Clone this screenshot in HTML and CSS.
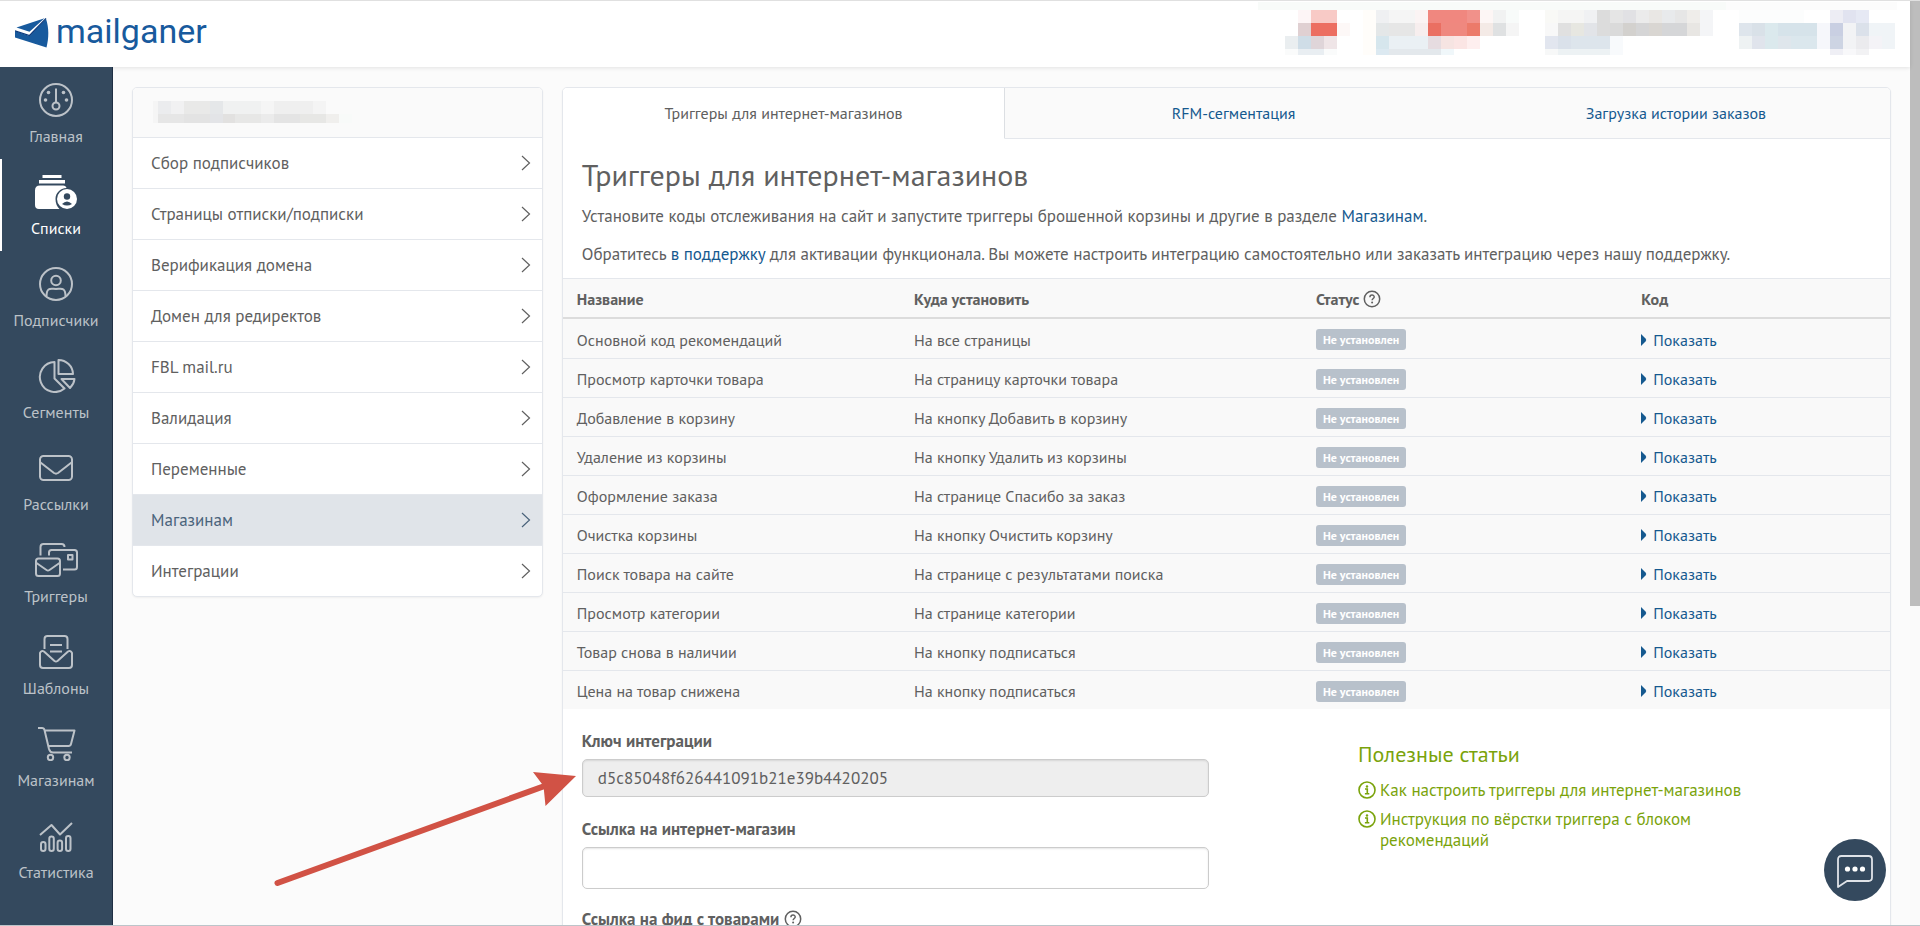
FILE: index.html
```
<!DOCTYPE html>
<html lang="ru">
<head>
<meta charset="utf-8">
<title>Mailganer — Магазинам</title>
<link rel="stylesheet" href="styles.css">
</head>
<body>
<svg class="defs" aria-hidden="true">
  <symbol id="chevron" viewBox="0 0 10 16"><path d="M1 1l7.500 7L1 15" fill="none" stroke="currentColor" stroke-width="1.200"/></symbol>
  <symbol id="caret" viewBox="0 0 6 12"><path d="M0 0L4.500 4.500Q6 6 4.500 7.500L0 12z" fill="currentColor"/></symbol>
  <symbol id="help" viewBox="0 0 18 18"><circle cx="9" cy="9" r="7.700" fill="none" stroke="currentColor" stroke-width="1.500"/><path d="M6.900 7.200C6.900 4.300 11.200 4.400 11.200 6.900 11.200 8.500 9.100 8.500 9.100 10.300" fill="none" stroke="currentColor" stroke-width="1.500"/><circle cx="9.100" cy="12.500" r="1" fill="currentColor"/></symbol>
  <symbol id="info" viewBox="0 0 18 18"><circle cx="9" cy="9" r="8" fill="none" stroke="currentColor" stroke-width="1.600"/><circle cx="9" cy="5.500" r="1.200" fill="currentColor"/><path d="M7 8h2.300v4.600M6.900 12.800h4.400" fill="none" stroke="currentColor" stroke-width="1.600"/></symbol>
</svg>

<div class="page">
  <header class="topbar">
    <a class="logo" href="#">
      <svg class="logo-mark" viewBox="0 0 34 31"><path d="M1.500 10.500L29.500 1.200 14.500 14.800z" fill="#185a9d"/><path d="M0 14l14.500 5L31 1.800C34 11 34 21 31.500 30.500L0 20.500z" fill="#185a9d"/><path d="M0 13.800l14.500 4.700L31 1.400" fill="none" stroke="#0d3a7c" stroke-width="1.200"/></svg>
      <span>mailganer</span>
    </a>
    <svg class="account" viewBox="1258 2 640 55" shape-rendering="crispEdges" aria-hidden="true">
      <path fill="#f8fbf9" d="M1258 2h468v8h-468z"/><path fill="#fcfcfc" d="M1726 2h171v8h-171z"/>
      <path fill="#fdf5f6" d="M1298 10h13v13h-13z"/><path fill="#f8cac6" d="M1311 10h26v13h-26z"/><path fill="#fffdfa" d="M1363 10h13v45h-13z"/><path fill="#eff0f2" d="M1376 10h13v13h-13z"/><path fill="#f5f5f5" d="M1389 10h26v13h-26z"/><path fill="#fbf4f4" d="M1415 10h13v13h-13z"/><path fill="#f0877f" d="M1428 10h39v13h-39z"/><path fill="#f1918a" d="M1467 10h13v13h-13z"/><path fill="#fdf6f5" d="M1480 10h13v13h-13z"/><path fill="#f1f2f2" d="M1493 10h13v13h-13z"/><path fill="#f8fbfa" d="M1506 10h13v13h-13z"/>
      <path fill="#e0d0d2" d="M1298 23h13v13h-13z"/><path fill="#ec6e61" d="M1311 23h26v13h-26z"/><path fill="#fdf8f7" d="M1337 23h13v13h-13z"/><path fill="#e4e7e8" d="M1376 23h13v13h-13z"/><path fill="#e6e6e6" d="M1389 23h26v13h-26z"/><path fill="#f7eeee" d="M1415 23h13v13h-13z"/><path fill="#ea6f62" d="M1428 23h13v13h-13z"/><path fill="#ef887f" d="M1441 23h26v13h-26z"/><path fill="#ec7a6a" d="M1467 23h13v13h-13z"/><path fill="#f4eae6" d="M1480 23h13v13h-13z"/><path fill="#dfe1e2" d="M1493 23h13v13h-13z"/><path fill="#f5f5f5" d="M1506 23h13v13h-13z"/>
      <path fill="#eaeef0" d="M1285 36h13v13h-13z"/><path fill="#cfdde7" d="M1298 36h13v13h-13z"/><path fill="#dfd5d9" d="M1311 36h13v13h-13z"/><path fill="#efe5e7" d="M1324 36h13v13h-13z"/><path fill="#d6e6ed" d="M1376 36h13v13h-13z"/><path fill="#eaf0f4" d="M1389 36h39v13h-39z"/><path fill="#e6dce0" d="M1428 36h13v13h-13z"/><path fill="#f6e4e2" d="M1441 36h13v13h-13z"/><path fill="#fbe5e4" d="M1454 36h13v13h-13z"/><path fill="#feefef" d="M1467 36h13v13h-13z"/>
      <path fill="#fafbfb" d="M1285 49h52v6h-52z"/><path fill="#e9eef2" d="M1298 49h26v6h-26z"/><path fill="#dce9f1" d="M1376 49h13v6h-13z"/><path fill="#e3e8ec" d="M1389 49h52v6h-52z"/><path fill="#f0f7fa" d="M1441 49h13v6h-13z"/>
      <path fill="#f9f9f6" d="M1545 10h13v13h-13z"/><path fill="#f5f5f4" d="M1558 10h26v13h-26z"/><path fill="#f0f1f3" d="M1584 10h13v13h-13z"/><path fill="#dcdcdc" d="M1597 10h13v26h-13z"/><path fill="#e5e5e5" d="M1610 10h13v13h-13z"/><path fill="#e1e1e4" d="M1623 10h13v13h-13z"/><path fill="#ebebeb" d="M1636 10h13v13h-13z"/><path fill="#e9e7e4" d="M1649 10h13v13h-13z"/><path fill="#e8eaec" d="M1662 10h13v13h-13z"/><path fill="#e6e6e6" d="M1675 10h12v13h-12z"/><path fill="#efedea" d="M1687 10h13v13h-13z"/><path fill="#f4f5f7" d="M1700 10h13v26h-13z"/>
      <path fill="#f8f8f8" d="M1545 23h13v13h-13z"/><path fill="#e0e0e0" d="M1558 23h13v13h-13z"/><path fill="#e7e7e1" d="M1571 23h13v13h-13z"/><path fill="#e2e4e8" d="M1584 23h13v13h-13z"/><path fill="#dadada" d="M1610 23h13v13h-13z"/><path fill="#d3d1ce" d="M1623 23h13v13h-13z"/><path fill="#d5d5d6" d="M1636 23h13v13h-13z"/><path fill="#d9d6d2" d="M1649 23h13v13h-13z"/><path fill="#d5d6d8" d="M1662 23h25v13h-25z"/><path fill="#e8e6e3" d="M1687 23h13v13h-13z"/>
      <path fill="#e2e6ef" d="M1545 36h13v13h-13z"/><path fill="#dae1ea" d="M1558 36h13v13h-13z"/><path fill="#dde5ec" d="M1571 36h39v13h-39z"/><path fill="#f8fafc" d="M1610 36h13v19h-13z"/><path fill="#f7f8f8" d="M1545 49h13v6h-13z"/><path fill="#edf2f4" d="M1558 49h52v6h-52z"/>
      <path fill="#fcfdfd" d="M1739 10h65v13h-65z"/><path fill="#dee5ec" d="M1739 23h13v13h-13z"/><path fill="#d9e1e8" d="M1752 23h13v13h-13z"/><path fill="#dbe9ed" d="M1765 23h13v26h-13z"/><path fill="#d6e3ea" d="M1778 23h39v13h-39z"/><path fill="#eef2f3" d="M1739 36h13v13h-13z"/><path fill="#e0e4ec" d="M1752 36h13v13h-13z"/><path fill="#dfe6ec" d="M1778 36h13v13h-13z"/><path fill="#dbe7ed" d="M1791 36h26v13h-26z"/><path fill="#f6f7fb" d="M1817 23h13v26h-13z"/>
      <path fill="#ededf4" d="M1830 10h13v13h-13z"/><path fill="#e1e3f0" d="M1843 10h13v13h-13z"/><path fill="#e6e9f4" d="M1856 10h13v13h-13z"/><path fill="#c9cfe2" d="M1830 23h13v13h-13z"/><path fill="#f2f3f5" d="M1843 23h13v26h-13z"/><path fill="#dbe1ea" d="M1856 23h13v13h-13z"/><path fill="#f0f4f7" d="M1869 23h26v26h-26z"/><path fill="#cdd4e3" d="M1830 36h13v13h-13z"/><path fill="#ebebee" d="M1856 36h13v13h-13z"/><path fill="#f4f3f7" d="M1869 36h13v13h-13z"/><path fill="#efeff5" d="M1830 49h13v6h-13z"/><path fill="#f8f8fa" d="M1843 49h13v6h-13z"/><path fill="#f2f2f4" d="M1856 49h13v6h-13z"/>
    </svg>
  </header>

  <div class="body">
    <nav class="sidebar">
      <a href="#"><svg viewBox="0 0 34 34"><circle cx="17" cy="17" r="16"/><circle cx="17" cy="23" r="3.500"/><path d="M17 19.500V5.500"/><g class="fill"><circle cx="9.500" cy="9.500" r="1.800"/><circle cx="24.500" cy="9.500" r="1.800"/><circle cx="6.500" cy="17" r="1.800"/><circle cx="27.500" cy="17" r="1.800"/></g></svg>Главная</a>
      <a href="#" class="active"><svg class="wide" viewBox="0 0 43 34"><path class="fill" d="M7.500 0h19v3h-19zM4 5h26v3.500h-26zM5 10.500h23q3 0 3.500 2.500C25 13.500 20.500 18 20.500 24q0 6 4 10H4q-4 0-4-4V15.500q0-5 5-5z"/><circle class="fill" cx="32" cy="24" r="10"/><g class="cut"><circle cx="32" cy="21.500" r="3.200"/><path d="M27 29q5-5 10 0-5 3-10 0z"/></g></svg>Списки</a>
      <a href="#"><svg viewBox="0 0 34 34"><circle cx="17" cy="17" r="16"/><circle cx="17" cy="13.500" r="4.800"/><path d="M7.500 29.500c0-10 4.500-7.500 9.500-7.500s9.500-2.500 9.500 7.500"/></svg>Подписчики</a>
      <a href="#"><svg class="wide" viewBox="-4.500 0 43 34"><path d="M15 3A15 15 0 1 0 25 29.500L15 19.500z"/><path d="M19 1a14.500 14.500 0 0 1 14.500 14H19z"/><path d="M22 20h13q-.5 5-4.500 9z"/></svg>Сегменты</a>
      <a href="#"><svg viewBox="0 0 34 34"><rect x="1" y="5" width="32" height="24" rx="3.500"/><path d="M1.500 11.500L15 22q2 1.300 4 0l13.500-10.500"/></svg>Рассылки</a>
      <a href="#"><svg class="wide" viewBox="0 0 43 34"><rect x="1" y="15.500" width="24" height="17.500" rx="2.500"/><path d="M1.500 20l10 7q1.500 1 3 0l10-7M5.500 12.500V4q0-3 3-3h18q3 0 3 3M14 12.500v-3q0-2.500 2.500-2.500h23q2.500 0 2.500 2.500V24q0 2.500-2.500 2.500H28"/><rect x="33" y="12" width="4.500" height="4.500"/></svg>Триггеры</a>
      <a href="#"><svg viewBox="0 0 34 34"><path d="M5.500 14V4q0-3 3-3h17q3 0 3 3v10M11 10h12M11 16.500h12M1 18v12q0 3 3 3h26q3 0 3-3V18q-1.500-3-4-1.500L18.500 26q-1.500 1-3 0L5 16.500Q2.500 15 1 18z"/></svg>Шаблоны</a>
      <a href="#"><svg class="wide" viewBox="-2 0 43 34"><path d="M1 1h4q2 0 2.500 2l4.500 19q1 3.500 4 3.500h19M7.500 3.500h30L34 17q-.5 2-2.500 2H11"/><circle cx="13.500" cy="30.500" r="2.700"/><circle cx="30" cy="30.500" r="2.700"/></svg>Магазинам</a>
      <a href="#"><svg viewBox="0 0 34 34"><path d="M1 16L12.500 6l8.500 9.500L33 4"/><rect x="2" y="23" width="4.500" height="9" rx="2.200"/><rect x="10.300" y="17.500" width="4.500" height="14.500" rx="2.200"/><rect x="18.600" y="21.500" width="4.500" height="10.500" rx="2.200"/><rect x="27" y="17" width="4.500" height="15" rx="2.200"/></svg>Статистика</a>
    </nav>

    <main class="content">
      <aside class="submenu">
        <div class="submenu-head">
          <svg class="account-name" viewBox="0 0 200 22" shape-rendering="crispEdges" aria-hidden="true">
            <path fill="#f5f5f5" d="M1 0h5v22h-5z"/><path fill="#ebecee" d="M6 0h13v13h-13z"/><path fill="#f1f1f2" d="M19 0h13v13h-13z"/><path fill="#e9e9e8" d="M32 0h26v13h-26z"/><path fill="#e5e7e9" d="M58 0h13v13h-13z"/><path fill="#f0f1f1" d="M71 0h38v13h-38z"/><path fill="#f5f5f5" d="M109 0h13v13h-13z"/><path fill="#efefef" d="M122 0h39v13h-39z"/><path fill="#f4f4f4" d="M161 0h13v13h-13z"/>
            <path fill="#e6e6e6" d="M6 13h26v9h-26z"/><path fill="#e3e3e3" d="M32 13h26v9h-26z"/><path fill="#e3e4e7" d="M58 13h13v9h-13z"/><path fill="#e2e1e0" d="M71 13h12v9h-12z"/><path fill="#e7e7e6" d="M83 13h26v9h-26z"/><path fill="#ebebeb" d="M109 13h13v9h-13z"/><path fill="#e4e4e4" d="M122 13h26v9h-26z"/><path fill="#e7e7e5" d="M148 13h26v9h-26z"/><path fill="#f0efed" d="M174 13h13v9h-13z"/><path fill="#f8faf9" d="M187 13h13v9h-13z"/>
          </svg>
        </div>
        <a href="#">Сбор подписчиков<svg><use href="#chevron"/></svg></a>
        <a href="#">Страницы отписки/подписки<svg><use href="#chevron"/></svg></a>
        <a href="#">Верификация домена<svg><use href="#chevron"/></svg></a>
        <a href="#">Домен для редиректов<svg><use href="#chevron"/></svg></a>
        <a href="#">FBL mail.ru<svg><use href="#chevron"/></svg></a>
        <a href="#">Валидация<svg><use href="#chevron"/></svg></a>
        <a href="#">Переменные<svg><use href="#chevron"/></svg></a>
        <a href="#" class="current">Магазинам<svg><use href="#chevron"/></svg></a>
        <a href="#">Интеграции<svg><use href="#chevron"/></svg></a>
      </aside>

      <section class="panel">
        <nav class="tabs">
          <a href="#" class="selected">Триггеры для интернет-магазинов</a>
          <a href="#">RFM-сегментация</a>
          <a href="#">Загрузка истории заказов</a>
        </nav>
        <div class="intro">
          <h1>Триггеры для интернет-магазинов</h1>
          <p>Установите коды отслеживания на сайт и запустите триггеры брошенной корзины и другие в разделе <a href="#">Магазинам</a>.</p>
          <p>Обратитесь <a href="#">в поддержку</a> для активации функционала. Вы можете настроить интеграцию самостоятельно или заказать интеграцию через нашу поддержку.</p>
        </div>
        <table class="codes">
          <colgroup><col class="c-name"><col class="c-place"><col class="c-status"><col></colgroup>
          <thead><tr><th>Название</th><th>Куда установить</th><th>Статус <svg class="help"><use href="#help"/></svg></th><th>Код</th></tr></thead>
          <tbody>
            <tr><td>Основной код рекомендаций</td><td>На все страницы</td><td><span class="badge">Не установлен</span></td><td><a href="#"><svg><use href="#caret"/></svg>Показать</a></td></tr>
            <tr><td>Просмотр карточки товара</td><td>На страницу карточки товара</td><td><span class="badge">Не установлен</span></td><td><a href="#"><svg><use href="#caret"/></svg>Показать</a></td></tr>
            <tr><td>Добавление в корзину</td><td>На кнопку Добавить в корзину</td><td><span class="badge">Не установлен</span></td><td><a href="#"><svg><use href="#caret"/></svg>Показать</a></td></tr>
            <tr><td>Удаление из корзины</td><td>На кнопку Удалить из корзины</td><td><span class="badge">Не установлен</span></td><td><a href="#"><svg><use href="#caret"/></svg>Показать</a></td></tr>
            <tr><td>Оформление заказа</td><td>На странице Спасибо за заказ</td><td><span class="badge">Не установлен</span></td><td><a href="#"><svg><use href="#caret"/></svg>Показать</a></td></tr>
            <tr><td>Очистка корзины</td><td>На кнопку Очистить корзину</td><td><span class="badge">Не установлен</span></td><td><a href="#"><svg><use href="#caret"/></svg>Показать</a></td></tr>
            <tr><td>Поиск товара на сайте</td><td>На странице с результатами поиска</td><td><span class="badge">Не установлен</span></td><td><a href="#"><svg><use href="#caret"/></svg>Показать</a></td></tr>
            <tr><td>Просмотр категории</td><td>На странице категории</td><td><span class="badge">Не установлен</span></td><td><a href="#"><svg><use href="#caret"/></svg>Показать</a></td></tr>
            <tr><td>Товар снова в наличии</td><td>На кнопку подписаться</td><td><span class="badge">Не установлен</span></td><td><a href="#"><svg><use href="#caret"/></svg>Показать</a></td></tr>
            <tr><td>Цена на товар снижена</td><td>На кнопку подписаться</td><td><span class="badge">Не установлен</span></td><td><a href="#"><svg><use href="#caret"/></svg>Показать</a></td></tr>
          </tbody>
        </table>
        <div class="settings">
          <form class="fields">
            <div class="field"><label for="key">Ключ интеграции</label><input id="key" type="text" value="d5c85048f626441091b21e39b4420205" readonly></div>
            <div class="field"><label for="shop">Ссылка на интернет-магазин</label><input id="shop" type="text"></div>
            <div class="field"><label for="feed">Ссылка на фид с товарами <svg class="help"><use href="#help"/></svg></label><input id="feed" type="text"></div>
          </form>
          <div class="articles">
            <h2>Полезные статьи</h2>
            <a href="#"><svg><use href="#info"/></svg><span>Как настроить триггеры для интернет-магазинов</span></a>
            <a href="#"><svg><use href="#info"/></svg><span>Инструкция по вёрстки триггера с блоком рекомендаций</span></a>
          </div>
        </div>
      </section>
    </main>
  </div>
</div>
<div class="scrollbar"><div class="thumb"></div></div>

<svg class="arrow" viewBox="0 0 304 118" aria-hidden="true"><path d="M4.500 113L273 15.500" stroke="#d15245" stroke-width="6" stroke-linecap="round"/><path d="M303 6L260 2l10.500 14 2 20z" fill="#d15245"/></svg>
<button class="chat" type="button" aria-label="Чат"><svg viewBox="0 0 36 34"><path d="M1 32V4.500Q1 1 4.500 1h27Q35 1 35 4.500v18q0 3.500-3.500 3.500H10z" fill="none" stroke="#dfe3e8" stroke-width="1.800" stroke-linejoin="round"/><g fill="#fff"><circle cx="10.500" cy="14" r="2.600"/><circle cx="18" cy="14" r="2.600"/><circle cx="25.500" cy="14" r="2.600"/></g></svg></button>
</body>
</html>
```
FILE: styles.css
```
*, *::before, *::after { box-sizing: border-box; }

body {
  margin: 0;
  height: 100vh;
  display: flex;
  overflow: hidden;
  position: relative;
  border-top: 1px solid #e0e0e0;
  border-bottom: 1px solid #bcc5ca;
  background: #fbfbfb;
  color: #606060;
  font-family: "PT Sans", Roboto, "Liberation Sans", sans-serif;
  font-size: 17px;
  line-height: 22px;
}

a { color: #15598f; text-decoration: none; }
svg { display: block; }
.defs { position: absolute; width: 0; height: 0; }

.page { flex: 1; min-width: 0; display: flex; flex-direction: column; }

/* top bar */
.topbar {
  flex: none;
  height: 66px;
  display: flex;
  justify-content: space-between;
  align-items: flex-start;
  padding: 1px 12px 0 15px;
  background: #fff;
  box-shadow: 0 1px 4px rgba(0, 0, 0, .1);
  position: relative;
}
.logo {
  display: flex;
  align-items: center;
  gap: 7px;
  height: 60px;
  color: #185a9d;
  font-family: Roboto, "Liberation Sans", sans-serif;
  font-size: 34px;
}
.logo span { padding-bottom: 2px; }
.logo-mark { width: 34px; height: 31px; }
.account { width: 640px; height: 55px; }

.body { flex: 1; min-height: 0; display: flex; }

/* sidebar */
.sidebar {
  flex: none;
  width: 113px;
  background: #34495e;
  border-right: 1px solid #1f2f44;
  position: relative;
}
.sidebar a {
  height: 92px;
  padding-top: 16px;
  display: flex;
  flex-direction: column;
  align-items: center;
  gap: 8px;
  color: #bcc2c8;
  font-size: 16px;
}
.sidebar a.active { color: #fff; box-shadow: inset 2px 0 #fff; }
.sidebar svg {
  width: 34px;
  height: 34px;
  fill: none;
  stroke: currentColor;
  stroke-width: 2;
  stroke-linejoin: round;
}
.sidebar svg.wide { width: 43px; }
.sidebar .fill { fill: currentColor; stroke: none; }
.sidebar .cut { fill: #34495e; stroke: none; }

/* content */
.content {
  flex: 1;
  min-width: 0;
  display: grid;
  grid-template-columns: minmax(0, 17fr) minmax(0, 55fr);
  align-items: start;
  gap: 19px;
  padding: 20px 19px;
}
.submenu, .panel {
  background: #fff;
  border: 1px solid #e4e7ec;
  border-radius: 5px;
  box-shadow: 0 1px 2px rgba(0, 0, 0, .05);
  overflow: hidden;
}
.submenu-head { height: 49px; padding: 13px 19px; background: #fafafa; }
.account-name { width: 200px; height: 22px; }
.submenu a {
  height: 51px;
  display: flex;
  align-items: center;
  justify-content: space-between;
  padding: 0 11px 0 18px;
  border-top: 1px solid #e4e7ec;
  color: #606060;
}
.submenu a svg { width: 10px; height: 16px; }
.submenu a.current { background: #e0e4e9; color: #4a637b; }

.tabs { display: grid; grid-template-columns: 31fr 32fr 30fr; }
.tabs a {
  height: 51px;
  display: flex;
  align-items: center;
  justify-content: center;
  background: #fafafa;
  border-bottom: 1px solid #e4e7ec;
  font-size: 16px;
}
.tabs a.selected { background: #fff; border-bottom-color: #fff; border-right: 1px solid #dcdfe3; color: #606060; }

.intro { padding: 18px 19px 13px; }
.intro h1 { margin: 0 0 12px; font-size: 30px; font-weight: 400; line-height: 36px; }
.intro p { margin: 0 0 16px; }
.intro p:last-child { margin: 0; }

.codes {
  width: 100%;
  table-layout: fixed;
  border-collapse: separate;
  border-spacing: 0;
  background: #f9f9f9;
  font-size: 16px;
}
.c-name { width: 25.4%; }
.c-place { width: 30.3%; }
.c-status { width: 24.5%; }
.codes th {
  height: 41px;
  padding: 2px 14px 0;
  text-align: left;
  border-top: 1px solid #e4e7ec;
  border-bottom: 2px solid #dcdcdc;
}
.codes td { height: 39px; padding: 2px 14px 0; border-top: 1px solid #e4e7ec; }
.codes tr:first-child td { border-top: 0; }
.codes td a { display: flex; align-items: center; gap: 6px; }
.codes td svg { width: 6px; height: 12px; }
.help { display: inline-block; width: 18px; height: 18px; vertical-align: -3px; }
.badge {
  display: block;
  width: max-content;
  padding: 0 7px;
  border-radius: 3px;
  background: #b8c1cb;
  color: #fff;
  font-size: 12px;
  font-weight: 700;
  line-height: 21px;
}

.settings {
  display: grid;
  grid-template-columns: minmax(0, 11fr) minmax(0, 9fr);
  gap: 149px;
  padding: 20px 19px;
}
.field label { display: block; margin-bottom: 6px; font-weight: 700; line-height: 24px; }
.field input {
  display: block;
  width: 100%;
  height: 42px;
  margin-bottom: 18px;
  padding: 0 15px;
  border: 1px solid #ccc;
  border-radius: 5px;
  box-shadow: inset 0 1px 2px rgba(0, 0, 0, .1);
  background: #fff;
  color: #606060;
  font: inherit;
}
.field input[readonly] { height: 38px; margin-bottom: 20px; background: #eee; }

.articles { max-width: 410px; padding-top: 11px; color: #7aa30b; }
.articles h2 { margin: 0 0 12px; font-size: 22px; font-weight: 400; line-height: 28px; }
.articles a { display: flex; align-items: flex-start; gap: 4px; margin-bottom: 8px; color: inherit; line-height: 21px; }
.articles svg { flex: none; width: 18px; height: 18px; margin-top: 1px; }

/* window scrollbar */
.scrollbar { flex: none; width: 10px; background: #fafafa; }
.thumb { height: 65.5%; background: #bdbdbd; }

/* overlays */
.arrow { position: absolute; left: 273px; top: 769px; width: 304px; height: 118px; fill: none; }
.chat {
  position: absolute;
  right: 34px;
  bottom: 24px;
  width: 62px;
  height: 62px;
  display: flex;
  align-items: center;
  justify-content: center;
  border: 0;
  padding: 3px 0 0;
  border-radius: 50%;
  background: #34495e;
}
.chat svg { width: 36px; height: 34px; }
```
